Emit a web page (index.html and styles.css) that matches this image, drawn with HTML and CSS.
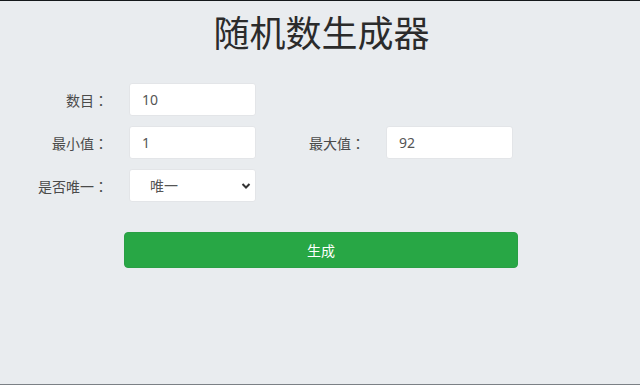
FILE: index.html
```html
<!DOCTYPE html>
<html>
<head>
    <meta charset="utf-8">
    <title>随机数生成器</title>
    <link rel="stylesheet" href="styles.css">
</head>
<body>
    <div class="container">
        <h1>随机数生成器</h1>

        <div class="form-grid">
            <label class="label" for="count">数目<span class="colon">：</span></label>
            <input class="field" type="text" id="count" value="10">
            <div></div>
            <div></div>

            <label class="label" for="min">最小值<span class="colon">：</span></label>
            <input class="field" type="text" id="min" value="1">
            <label class="label" for="max">最大值<span class="colon">：</span></label>
            <input class="field" type="text" id="max" value="92">

            <label class="label" for="unique">是否唯一<span class="colon">：</span></label>
            <div class="select-wrap">
                <select class="field select" id="unique">
                    <option>唯一</option>
                    <option>不唯一</option>
                </select>
                <svg class="chevron" width="10" height="6" viewBox="0 0 10 6">
                    <polyline points="1.5,1 5,4.5 8.5,1" fill="none" stroke="#333" stroke-width="2"/>
                </svg>
            </div>
        </div>

        <button class="btn">生成</button>
    </div>
</body>
</html>
```

FILE: styles.css
```css
html, body { margin: 0; padding: 0; }
body { font-family: "Noto Sans", "Noto Sans CJK SC", sans-serif; background: #e9ecef; color: #333; min-height: 385px; box-sizing: border-box; border-top: 1px solid #15181b; border-bottom: 1px solid #7b8085; }
.container { width: 640px; }
h1 { margin: 11px 0 0; font-size: 36px; font-weight: 400; line-height: 43px; text-align: center; color: #2b2b2b; padding-left: 3px; }
.form-grid { display: grid; grid-template-columns: 82px 127px 82px 127px; column-gap: 24px; row-gap: 10px; margin: 28px 0 0 23px; align-items: center; }
.label { text-align: right; font-size: 14px; color: #4a4a4a; white-space: nowrap; margin-right: -3px; }
.colon { font-family: "Noto Sans CJK JP", sans-serif; }
.field { box-sizing: border-box; height: 33px; width: 127px; background: #fff; border: 1px solid #e3e5e8; border-radius: 3px; padding: 0 12px; font-size: 14px; font-family: inherit; color: #555; outline: none; }
.select-wrap { position: relative; width: 127px; height: 33px; }
.select { appearance: none; -webkit-appearance: none; padding-left: 20px; }
.chevron { position: absolute; right: 5px; top: 14px; pointer-events: none; }
.btn { display: block; box-sizing: border-box; width: 394px; height: 36px; margin: 30px 0 0 124px; background: #28a745; color: #fff; border: 1px solid #2a9f45; border-radius: 4px; font-size: 14px; font-family: inherit; cursor: pointer; }
.btn:hover { background: #218838; }
```
